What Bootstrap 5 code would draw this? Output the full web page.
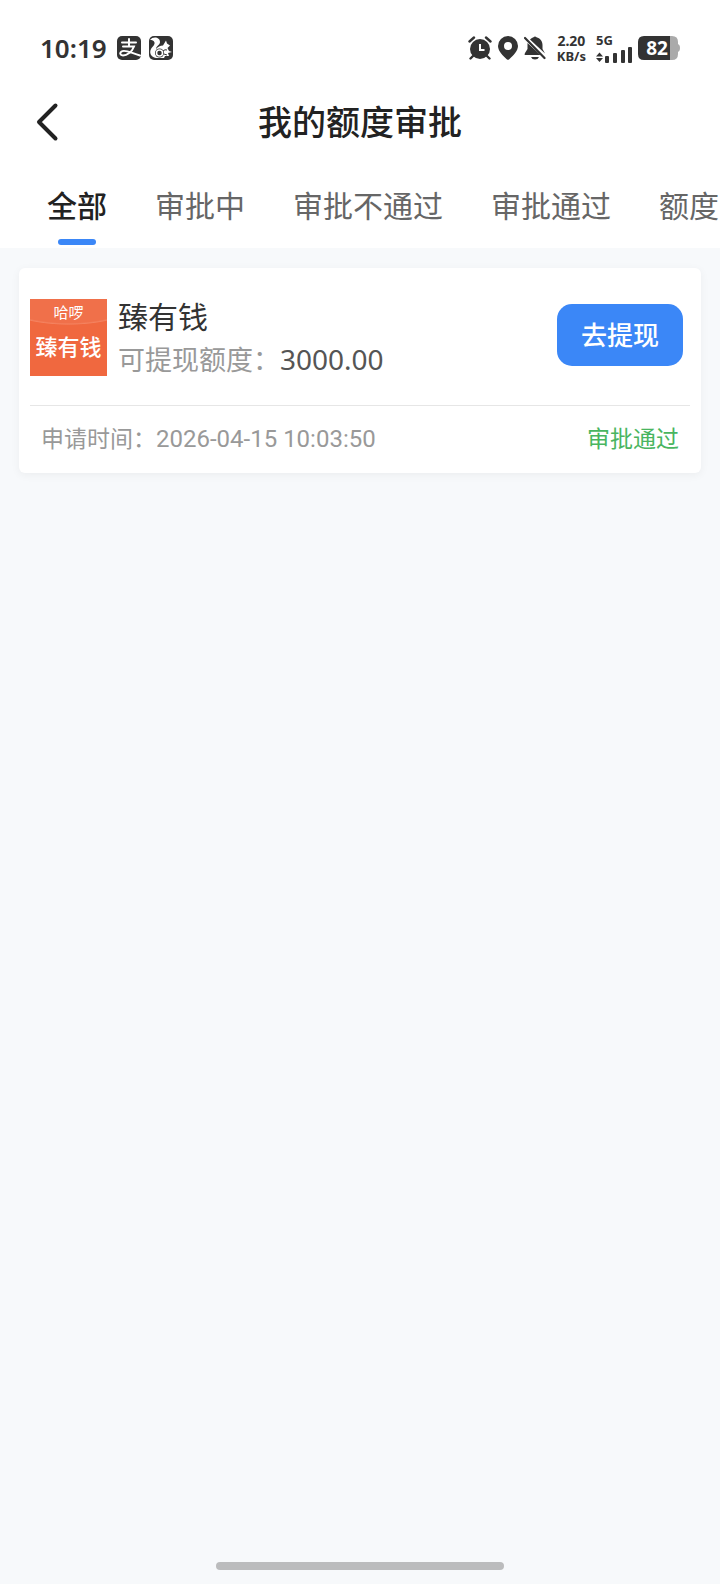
<!DOCTYPE html>
<html lang="zh-CN">
<head>
<meta charset="utf-8">
<meta name="viewport" content="width=device-width, initial-scale=1">
<title>我的额度审批</title>
<link href="https://cdn.jsdelivr.net/npm/bootstrap@5.3.0/dist/css/bootstrap.min.css" rel="stylesheet">
<style>
  :root { --ink: #333; --blue: #3b87f7; --page: #f7f9fb; }
  body { background: var(--page); color: var(--ink); font-family: "Noto Sans", "Noto Sans CJK SC", sans-serif; }
  svg { display: block; flex: none; }
  .status { height: 96px; padding: 0 40px; }
  .clock { font-size: 26px; line-height: 32px; font-weight: 600; margin-right: 10px; }
  .tiny { font-size: 13px; line-height: 14px; font-weight: 700; }
  .rate { font-size: 14px; line-height: 16px; }
  .signals { gap: 10px; padding-left: 11px; }
  .title-bar { height: 52px; padding: 0 32px; }
  .title-bar h1 { font-size: 34px; line-height: 52px; font-weight: 500; color: #222; }
  .side { width: 40px; }
  .tabs { gap: 48px; padding: 32px 0 3px 47px; overflow: hidden; list-style: none; margin: 0; }
  .tabs a { display: flex; flex-direction: column; align-items: center; gap: 7px; font-size: 30px; line-height: 52px; color: #666; text-decoration: none; white-space: nowrap; }
  .tabs a.active { color: #222; font-weight: 500; }
  .tabs a.active::after { content: ""; width: 38px; height: 6px; border-radius: 3px; background: var(--blue); }
  .quota { border: 0; border-radius: 6px; margin: 20px 19px 0; padding: 0 11px; box-shadow: 0 2px 10px rgba(0, 0, 0, .05); }
  .quota-top { padding: 31px 7px 21px 0; }
  .logo { width: 77px; height: 77px; color: #fff; background: radial-gradient(ellipse 76px 28px at 50% -2px, #f0704a 92%, #f4825f 97%, #f0683f 100%); }
  .logo small { font-size: 15px; line-height: 26px; }
  .logo b { font-size: 22px; line-height: 42px; font-weight: 500; }
  .detail { padding-left: 11px; }
  .name { font-size: 30px; line-height: 36px; font-weight: 400; margin: 0; }
  .amount { font-size: 27px; line-height: 48px; color: #999; }
  .amount strong { font-size: 28px; font-weight: 400; color: #555; }
  .go { width: 126px; height: 62px; margin-top: 5px; border-radius: 15px; padding: 0; font-size: 26px; font-weight: 500; color: #fff; background: var(--blue); border: 0; }
  .quota-foot { border-top: 1px solid #e6e6e6; padding: 0 11px 2px; font-size: 23px; line-height: 64px; color: #999; }
  .quota-foot time { font-family: Roboto, "Noto Sans", sans-serif; font-size: 24px; }
  .passed { color: #49b560; }
  .home-bar { width: 40%; height: 8px; border-radius: 4px; background: #bbbcbd; margin: auto auto 14px; }
</style>
</head>
<body class="d-flex flex-column min-vh-100">
<header class="bg-white">
  <div class="status d-flex align-items-center justify-content-between">
    <div class="d-flex align-items-center">
      <span class="clock">10:19</span>
      <svg width="24" height="24" viewBox="0 0 24 24" aria-hidden="true"><rect width="24" height="24" rx="5" fill="#333"/><g fill="none" stroke="#fff" stroke-width="2" stroke-linecap="round"><path d="M5 6.500H19M12 3V10.500M6 10.500H17C15 16 10 19.500 6 19.500C3 19.500 2.500 17 4.500 15.500C8 13 14 17 23 19.500"/></g></svg>
      <svg class="ms-2" width="24" height="24" viewBox="0 0 24 24" aria-hidden="true"><rect width="24" height="24" rx="5" fill="#333"/><path fill="#fff" d="M1 4C4 0 11 1 11 6C11 9 7 10 7 13C9 11 11 9.500 14 9.500L15.500 7L17 4.500L18 7.500L21 9.500L18.500 12L20 15L23 16L19 17L20 20H16L15 22H7C2 21 0 17 2 13C3 11 6 9 5.500 6.500C5 4.500 3 4 1 4Z"/><circle cx="10.500" cy="17" r="4.500" fill="#333"/><circle cx="10.500" cy="17" r="3" fill="none" stroke="#fff" stroke-width="1.500"/><path d="M14 15Q16 13 18 14M15 18L18 19" stroke="#333" fill="none"/></svg>
    </div>
    <div class="d-flex align-items-center">
      <svg width="24" height="24" viewBox="0 0 24 24" aria-hidden="true"><circle cx="12" cy="13" r="10" fill="#333"/><path d="M1.500 5.500L6 1.500M22.500 5.500L18 1.500M5 20L2.500 22.500M19 20L21.500 22.500" stroke="#333" stroke-width="2.400" stroke-linecap="round"/><path d="M12 8V14H16.500" stroke="#fff" stroke-width="2" fill="none"/></svg>
      <svg class="mx-1" width="24" height="24" viewBox="0 0 24 24" aria-hidden="true"><path fill="#333" fill-rule="evenodd" d="M12 0A10 10 0 0 0 2 10C2 15 7 20 11 23.500Q12 24.200 13 23.500C17 20 22 15 22 10A10 10 0 0 0 12 0ZM12 6A4 4 0 1 1 12 14A4 4 0 1 1 12 6Z"/></svg>
      <svg width="22" height="24" viewBox="0 0 22 24" aria-hidden="true"><path fill="#333" d="M6 3.500Q8 1.500 9.500 1.200Q11 0 12.500 1.200C16 2 18.500 5 18.500 9V13L21 17.500L6 3.500ZM3.500 7L16.500 19H1Q0 19 1 17L3.500 13ZM7 21H15Q14 23.500 11 23.500Q8 23.500 7 21Z"/><path d="M1 2L20.500 22" stroke="#333" stroke-width="2.200" stroke-linecap="round"/></svg>
      <div class="signals d-flex align-items-center">
        <div class="tiny text-center"><div class="rate">2.20</div><div>KB/s</div></div>
        <div>
          <div class="tiny">5G</div>
          <svg width="38" height="16" viewBox="0 0 38 16" aria-hidden="true"><g fill="#333"><path d="M0 9.500L3.500 5.500L7 9.500ZM0 11L3.500 15L7 11Z"/><rect x="9" y="9" width="4" height="7" rx="1"/><rect x="17" y="6" width="4" height="10" rx="1"/><rect x="25" y="3" width="4" height="13" rx="1"/><rect x="32" y="0" width="4" height="16" rx="1"/></g></svg>
        </div>
      </div>
      <svg class="ms-1" width="42" height="24" viewBox="0 0 42 24" role="img" aria-label="82%"><path fill="#aaa" d="M30 0H34Q40 0 40 6V18Q40 24 34 24H30Z"/><path fill="#aaa" d="M39 8Q42 8 42 12T39 16Z"/><path fill="#333" d="M6 0H32V24H6Q0 24 0 18V6Q0 0 6 0Z"/><text x="19" y="18.500" text-anchor="middle" fill="#fff" font-size="19" font-weight="700">82</text></svg>
    </div>
  </div>
  <div class="title-bar d-flex align-items-center justify-content-between">
    <button type="button" class="side btn p-0 border-0" aria-label="返回"><svg width="30" height="40" viewBox="0 0 30 40"><path d="M23.500 3.500L7 20L23.500 36.500" fill="none" stroke="#222" stroke-width="4" stroke-linecap="round" stroke-linejoin="round"/></svg></button>
    <h1 class="m-0">我的额度审批</h1>
    <span class="side"></span>
  </div>
  <nav aria-label="审批状态">
    <ul class="tabs d-flex">
      <li><a class="active" href="#" aria-current="page">全部</a></li>
      <li><a href="#">审批中</a></li>
      <li><a href="#">审批不通过</a></li>
      <li><a href="#">审批通过</a></li>
      <li><a href="#">额度</a></li>
    </ul>
  </nav>
</header>
<main>
  <article class="quota card">
    <div class="quota-top d-flex">
      <div class="logo d-flex flex-column align-items-center flex-shrink-0"><small>哈啰</small><b>臻有钱</b></div>
      <div class="detail flex-grow-1">
        <h2 class="name">臻有钱</h2>
        <div class="amount">可提现额度：<strong>3000.00</strong></div>
      </div>
      <button type="button" class="go btn">去提现</button>
    </div>
    <div class="quota-foot d-flex justify-content-between">
      <span>申请时间：<time datetime="2026-04-15T10:03:50">2026-04-15 10:03:50</time></span>
      <span class="passed">审批通过</span>
    </div>
  </article>
</main>
<div class="home-bar"></div>
<script src="https://cdn.jsdelivr.net/npm/bootstrap@5.3.0/dist/js/bootstrap.bundle.min.js"></script>
</body>
</html>
